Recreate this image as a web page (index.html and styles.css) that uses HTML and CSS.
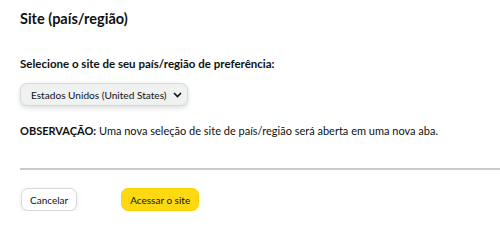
FILE: index.html
```html
<!DOCTYPE html>
<html lang="pt-BR">
<head>
    <meta charset="UTF-8">
    <title>Site (país/região)</title>
    <link rel="stylesheet" href="styles.css">
</head>
<body>
    <div class="dialog">
        <h2 class="title">Site (país/região)</h2>

        <p class="label">Selecione o site de seu país/região de preferência:</p>

        <button class="select">
            <span>Estados Unidos (United States)</span>
            <svg class="chevron" width="9" height="6" viewBox="0 0 9 6">
                <path d="M1 1l3.5 3.5L8 1" fill="none" stroke="#0f1111" stroke-width="1.6"/>
            </svg>
        </button>

        <p class="note"><strong>OBSERVAÇÃO:</strong> Uma nova seleção de site de país/região será aberta em uma nova aba.</p>

        <hr class="divider">

        <div class="actions">
            <button class="btn btn-cancel">Cancelar</button>
            <button class="btn btn-go">Acessar o site</button>
        </div>
    </div>
</body>
</html>
```

FILE: styles.css
```css
* {
    margin: 0;
    padding: 0;
    box-sizing: border-box;
}

body {
    background: #fff;
    color: #0f1111;
    font-family: Lato, "Liberation Sans", Arial, sans-serif;
    font-size: 11px;
}

.dialog {
    padding: 10px 0 0 20px;
}

.title {
    font-size: 14.5px;
    font-weight: bold;
    line-height: 18px;
}

.label {
    margin-top: 29px;
    font-size: 11.5px;
    font-weight: bold;
    line-height: 14px;
}

.select {
    display: flex;
    align-items: center;
    gap: 6px;
    margin-top: 12px;
    height: 23px;
    padding: 0 5px 0 10px;
    background: #f0f2f2;
    border: 1px solid #d5d9d9;
    border-radius: 7px;
    box-shadow: 0 2px 5px rgba(15, 17, 17, 0.15);
    font: inherit;
    font-size: 10.1px;
    white-space: nowrap;
    color: #0f1111;
}

.note {
    margin-top: 18px;
    line-height: 14px;
}

.divider {
    margin-top: 30px;
    border: none;
    height: 2px;
    background: #c9cccc;
}

.actions {
    display: flex;
    gap: 44px;
    margin-top: 18px;
    padding-left: 1px;
}

.btn {
    height: 23px;
    padding: 0 8px;
    border-radius: 7px;
    font: inherit;
    font-size: 10px;
    color: #0f1111;
    cursor: pointer;
}

.btn-cancel {
    background: #fff;
    border: 1px solid #d5d9d9;
    box-shadow: 0 2px 5px rgba(213, 217, 217, 0.5);
}

.btn-go {
    background: #ffd814;
    border: 1px solid #fcd200;
}
```
